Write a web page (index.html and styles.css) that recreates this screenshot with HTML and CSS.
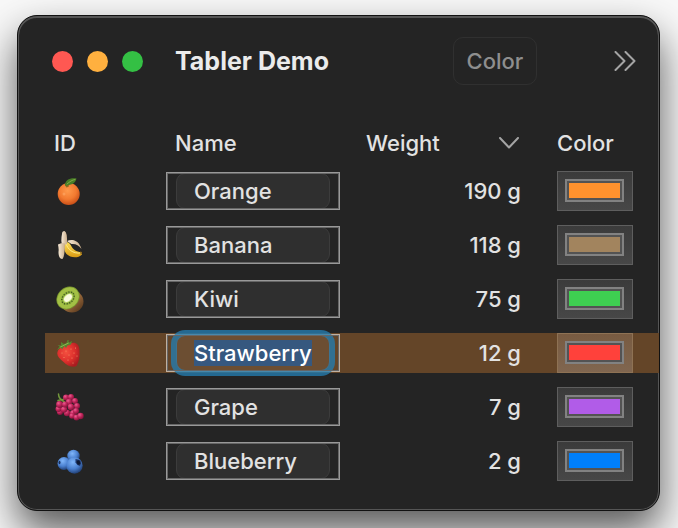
FILE: index.html
```html
<!DOCTYPE html>
<html lang="en">
<head>
<meta charset="utf-8">
<title>Tabler Demo</title>
<link rel="stylesheet" href="styles.css">
</head>
<body>
<svg class="defs" aria-hidden="true">
  <defs>
    <radialGradient id="g-orange" cx=".45" cy=".35" r=".65"><stop offset="0" stop-color="#ff9a4c"/><stop offset=".6" stop-color="#f27a30"/><stop offset="1" stop-color="#c94f18"/></radialGradient>
    <linearGradient id="g-banana" x1="0" y1="0" x2="0" y2="1"><stop offset="0" stop-color="#ffe05a"/><stop offset="1" stop-color="#d99a12"/></linearGradient>
    <linearGradient id="g-peel" x1="0" y1="0" x2="1" y2="0"><stop offset="0" stop-color="#f7ead6"/><stop offset="1" stop-color="#c9ad8c"/></linearGradient>
    <linearGradient id="g-kiwi" x1="0" y1="0" x2="1" y2="1"><stop offset=".5" stop-color="#9a6a3c"/><stop offset="1" stop-color="#4a2e18"/></linearGradient>
    <radialGradient id="g-straw" cx=".4" cy=".4" r=".65"><stop offset="0" stop-color="#f4503f"/><stop offset=".6" stop-color="#dc2f2c"/><stop offset="1" stop-color="#a81c20"/></radialGradient>
    <radialGradient id="g-grape" cx=".35" cy=".3" r=".75"><stop offset="0" stop-color="#ee5c92"/><stop offset=".5" stop-color="#bd2459"/><stop offset="1" stop-color="#7d1238"/></radialGradient>
    <radialGradient id="g-blue" cx=".4" cy=".3" r=".75"><stop offset="0" stop-color="#80b6fa"/><stop offset=".55" stop-color="#4a80d0"/><stop offset="1" stop-color="#1c3768"/></radialGradient>
  </defs>
</svg>
<main class="window">
  <header class="toolbar">
    <div class="lights">
      <button class="light close" aria-label="Close"></button>
      <button class="light minimize" aria-label="Minimize"></button>
      <button class="light zoom" aria-label="Zoom"></button>
    </div>
    <h1 class="title">Tabler Demo</h1>
    <button class="tool" disabled>Color</button>
    <button class="more" aria-label="More toolbar items">
      <svg width="22" height="20" viewBox="0 0 22 20"><path d="M1.500 1l9 9-9 9M11.500 1l9 9-9 9"/></svg>
    </button>
  </header>
  <table class="fruits">
    <thead>
      <tr>
        <th class="id">ID</th>
        <th class="name">Name</th>
        <th class="weight"><button class="sort">Weight
          <svg width="22" height="12" viewBox="0 0 22 12"><path d="M1 1l9 9.500 9-9.500"/></svg></button></th>
        <th class="color">Color</th>
      </tr>
    </thead>
    <tbody>
      <tr>
        <td class="id"><svg width="30" height="28" viewBox="0 0 30 28" role="img" aria-label="Orange">
          <circle cx="13.700" cy="17" r="11" fill="url(#g-orange)"/>
          <path d="M9.500 7.500q2.500-1 4 .5t-2 2.500z" fill="#8f6a22"/>
          <path d="M10 8.500C10 3 15 .5 21.500 1.500c-1 5-6 7-11.500 7z" fill="#477d26"/>
          <path d="M12 7c3-2.500 5-4 8-4.500" stroke="#82ab4a" fill="none"/>
          <circle cx="9" cy="17" r="1.500" fill="#ffb070" opacity=".5"/>
        </svg></td>
        <td class="name"><div class="cell"><input type="text" aria-label="Name" value="Orange"></div></td>
        <td class="weight">190 g</td>
        <td class="color"><input type="color" aria-label="Color" value="#ff922e"></td>
      </tr>
      <tr>
        <td class="id"><svg width="30" height="28" viewBox="0 0 30 28" role="img" aria-label="Banana">
          <path d="M12 10c5-2.500 12-1 14.500 8-3-4-6-5.500-10-5z" fill="url(#g-peel)"/>
          <path d="M10 11c2.500-.5 4.500.5 6 3.500 2 4 5 6.500 10.500 6.500l.5 2.500c-4.500 4.500-12 3-15.500-.5-2.500-2.500-3-7-1.500-12z" fill="url(#g-banana)"/>
          <path d="M11 13c2 5 6 10 15 9" stroke="#ffec86" fill="none"/>
          <path d="M7 3q0-3 2.500-3 3 1 2.500 13L7.500 15q-2-5-.5-12z" fill="url(#g-peel)"/>
          <path d="M3 13.500q4-2.500 7-1l-.5 8q-.5 6-2 7.500-4 0-4-7 .5-3-.5-7.500z" fill="url(#g-peel)"/>
          <path d="M25 20.500l2 .5v2l-1.500.5z" fill="#8c681b"/>
        </svg></td>
        <td class="name"><div class="cell"><input type="text" aria-label="Name" value="Banana"></div></td>
        <td class="weight">118 g</td>
        <td class="color"><input type="color" aria-label="Color" value="#a2845e"></td>
      </tr>
      <tr>
        <td class="id"><svg width="30" height="28" viewBox="0 0 30 28" role="img" aria-label="Kiwi">
          <ellipse cx="17" cy="16.500" rx="11.500" ry="11" fill="url(#g-kiwi)"/>
          <g transform="rotate(-42 13 13)">
            <ellipse cx="13" cy="13" rx="12.500" ry="10.500" fill="#79952f"/>
            <ellipse cx="13" cy="13" rx="11.700" ry="9.800" fill="#a3c045"/>
            <ellipse cx="13" cy="13" rx="8" ry="6" fill="#8bae3a"/>
            <ellipse cx="13" cy="13" rx="7" ry="5" fill="none" stroke="#35481f" stroke-width="1.300" stroke-dasharray="1 1.700"/>
            <ellipse cx="13" cy="13" rx="5.500" ry="3.800" fill="#c5dc7d"/>
            <ellipse cx="13" cy="13" rx="4.500" ry="2.900" fill="#fafbe0"/>
          </g>
        </svg></td>
        <td class="name"><div class="cell"><input type="text" aria-label="Name" value="Kiwi"></div></td>
        <td class="weight">75 g</td>
        <td class="color"><input type="color" aria-label="Color" value="#3ecf51"></td>
      </tr>
      <tr class="selected">
        <td class="id"><svg width="30" height="28" viewBox="0 0 30 28" role="img" aria-label="Strawberry">
          <path d="M2.500 13c1-4 6-6 11-8 6-2.500 10.500-1 11 6 .5 8-1 12.500-3 16-3 2-9.500 0-13.500-4.500-4-3.500-6.500-6-5.500-9.500z" fill="url(#g-straw)"/>
          <g fill="#f9a574"><circle cx="7" cy="14" r=".5"/><circle cx="11" cy="12" r=".5"/><circle cx="16" cy="10" r=".5"/><circle cx="20.500" cy="9" r=".5"/><circle cx="9" cy="18.500" r=".5"/><circle cx="14" cy="16" r=".5"/><circle cx="19" cy="14" r=".5"/><circle cx="13" cy="21" r=".5"/><circle cx="17" cy="19" r=".5"/><circle cx="22" cy="17" r=".5"/><circle cx="18" cy="24" r=".5"/></g>
          <path d="M2 11l2.500-3.500-2-1.500 3.500.5L6 3l3 2 2.500-1 1-3 1.500.5-1 2.500 4-2-1 3.500-3.500 1L11 9 9.500 7 7 10.500l-1-2z" fill="#558530"/>
          <path d="M5.500 8l8-4" stroke="#8cb44d" fill="none"/>
        </svg></td>
        <td class="name"><div class="cell"><input type="text" id="editing" aria-label="Name" value="Strawberry"></div></td>
        <td class="weight">12 g</td>
        <td class="color"><input type="color" aria-label="Color" value="#ff413b"></td>
      </tr>
      <tr>
        <td class="id"><svg width="30" height="28" viewBox="0 0 30 28" role="img" aria-label="Grape">
          <path d="M3.500 1c0 4 2 6 6 8M3 7.500l4-1M10 4l-2 3" stroke="#73983c" stroke-width="1.500" fill="none"/>
          <g fill="url(#g-grape)"><circle cx="11" cy="4.500" r="3"/><circle cx="16" cy="4" r="3"/><circle cx="20" cy="8" r="3"/><circle cx="22" cy="13" r="3"/><circle cx="12" cy="20" r="3.200"/><circle cx="5" cy="19" r="3"/><circle cx="3.500" cy="16" r="3"/><circle cx="18" cy="20" r="3"/><circle cx="14" cy="9" r="3.200"/><circle cx="9" cy="16.500" r="3.200"/><circle cx="4.500" cy="11.500" r="3.400"/><circle cx="10" cy="11.500" r="3"/><circle cx="16" cy="14" r="3.300"/><circle cx="21" cy="18" r="3"/><circle cx="17" cy="23" r="2.800"/><circle cx="21.500" cy="24.500" r="3"/><circle cx="25.500" cy="23" r="3.200"/></g>
        </svg></td>
        <td class="name"><div class="cell"><input type="text" aria-label="Name" value="Grape"></div></td>
        <td class="weight">7 g</td>
        <td class="color"><input type="color" aria-label="Color" value="#b15ce8"></td>
      </tr>
      <tr>
        <td class="id"><svg width="30" height="28" viewBox="0 0 30 28" role="img" aria-label="Blueberry">
          <circle cx="18.500" cy="9" r="6.200" fill="url(#g-blue)"/>
          <circle cx="9" cy="16.500" r="6.500" fill="url(#g-blue)"/>
          <ellipse cx="4.500" cy="15.500" rx="1" ry="1.700" fill="#1b315c"/>
          <circle cx="19.500" cy="18.500" r="8.200" fill="url(#g-blue)"/>
          <path d="M20.500 12l2.500.5 2.500 1 .5 3-1 2.500-2.500-1-2-2.500z" fill="#20386a"/>
          <ellipse cx="23.500" cy="15.500" rx="1.700" ry="2.300" transform="rotate(-25 23.500 15.500)" fill="#0d1833"/>
        </svg></td>
        <td class="name"><div class="cell"><input type="text" aria-label="Name" value="Blueberry"></div></td>
        <td class="weight">2 g</td>
        <td class="color"><input type="color" aria-label="Color" value="#007ffa"></td>
      </tr>
    </tbody>
  </table>
</main>
<script src="script.js"></script>
</body>
</html>
```
FILE: styles.css
```css
* {
  box-sizing: border-box;
}

body {
  margin: 0;
  padding: 15px 18px 17px 17px;
  min-height: 100vh;
  display: flex;
  background: #f8f8f8;
  color: #e2e2e2;
  font: 450 22px/28px Inter, "Liberation Sans", sans-serif;
  overflow: hidden;
}

button,
input {
  font: inherit;
  color: inherit;
}

button {
  padding: 0;
  border: 0;
  background: none;
}

svg {
  display: block;
}

svg path {
  stroke-linecap: round;
  stroke-linejoin: round;
}

.defs {
  position: absolute;
  width: 0;
  height: 0;
}

.window {
  flex: 1;
  border: 1px solid #111;
  border-radius: 20px;
  background: #242424;
  box-shadow: inset 0 0 0 1px #555, inset 0 1px 0 1px #555, 0 20px 40px rgba(0, 0, 0, 0.65);
}

.toolbar {
  display: flex;
  align-items: center;
  height: 90px;
  padding: 0 23px 0 34px;
}

.lights {
  display: flex;
  gap: 14px;
}

.light {
  width: 21px;
  height: 21px;
  border-radius: 50%;
}

.close {
  background: #ff5852;
}

.minimize {
  background: #ffb03f;
}

.zoom {
  background: #34c044;
}

.title {
  flex: 1;
  margin: 0 0 0 32px;
  font-size: 25px;
  font-weight: 700;
  color: #ebebeb;
}

.tool {
  width: 84px;
  height: 48px;
  border: 1px solid #303030;
  border-radius: 10px;
  color: #8e8e8e;
}

.more {
  margin-left: 77px;
}

.more path,
.sort path {
  fill: none;
  stroke: #a4a4a4;
  stroke-width: 2;
}

.fruits {
  width: calc(100% - 27px);
  margin-left: 27px;
  table-layout: fixed;
  border-spacing: 0 14px;
}

th {
  height: 37px;
  padding: 9px 0 0;
  font-weight: 450;
  text-align: left;
}

td {
  height: 40px;
  padding: 0;
}

th.id {
  width: 121px;
  padding-left: 9px;
}

td.id {
  padding-left: 10px;
}

th.name {
  padding-left: 9px;
}

th.weight {
  width: 191px;
  padding-right: 36px;
}

td.weight {
  padding-right: 36px;
  text-align: right;
}

th.color {
  width: 102px;
}

.sort {
  display: flex;
  align-items: center;
  justify-content: space-between;
  width: 100%;
}

.cell {
  height: 38px;
  margin-right: 26px;
  padding: 0 9px;
  border: 1px solid #999;
  outline: 1px solid #666;
  outline-offset: -2px;
}

.cell input {
  display: block;
  width: 100%;
  height: 36px;
  padding: 0 17px;
  border: 1px solid #3c3c3c;
  border-radius: 9px;
  background: #2f2f2f;
  outline: none;
}

.selected td {
  background: #644528;
}

.selected .cell {
  border-color: #c0b0a0;
}

.selected .cell input {
  border-color: #3d7492;
  background: #6c4e32;
  color: #fff;
  box-shadow: 0 0 0 5px rgba(36, 124, 176, 0.78);
}

.cell input::selection {
  background: #36587f;
  color: #fff;
}

input[type="color"] {
  display: block;
  width: 76px;
  height: 40px;
  padding: 0;
  border: 1px solid #5e5e5e;
  background: linear-gradient(#3b3b3b, #474747);
}

input[type="color"]::-webkit-color-swatch-wrapper {
  padding: 7px 8px 8px 7px;
}

input[type="color"]::-webkit-color-swatch {
  border: 2px solid #828282;
  border-radius: 0;
  box-shadow: inset 0 0 0 2px #535353;
}

.selected input[type="color"] {
  border-color: #8e7254;
  background: linear-gradient(#785b41, #806650);
}
```
FILE: script.js
```js
const editing = document.getElementById("editing");
editing.focus();
editing.select();
```
